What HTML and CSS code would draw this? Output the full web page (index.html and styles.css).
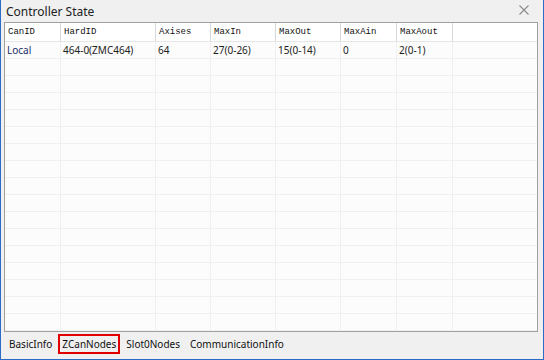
FILE: index.html
```html
<!DOCTYPE html>
<html>
<head>
  <title>Controller State</title>
  <link rel="stylesheet" href="styles.css">
</head>
<body>
  <div class="window">
    <div class="title-bar">
      <span class="title">Controller State</span>
      <span class="close">
        <svg width="10" height="10" viewBox="0 0 10 10"><path d="M0.5 0.5 L9.5 9.5 M9.5 0.5 L0.5 9.5" stroke="#8a8a8a" stroke-width="1.1" fill="none"/></svg>
      </span>
    </div>

    <div class="grid-frame">
      <table class="grid">
        <thead>
          <tr>
            <th class="c1">CanID</th>
            <th class="c2">HardID</th>
            <th class="c3">Axises</th>
            <th class="c4">MaxIn</th>
            <th class="c5">MaxOut</th>
            <th class="c6">MaxAin</th>
            <th class="c7">MaxAout</th>
            <th></th>
          </tr>
        </thead>
        <tbody id="rows">
          <tr>
            <td class="local">Local</td>
            <td>464-0(ZMC464)</td>
            <td>64</td>
            <td>27(0-26)</td>
            <td>15(0-14)</td>
            <td>0</td>
            <td>2(0-1)</td>
            <td></td>
          </tr>
        </tbody>
      </table>
    </div>

    <div class="tabs">
      <span class="tab">BasicInfo</span>
      <span class="tab active">ZCanNodes</span>
      <span class="tab">Slot0Nodes</span>
      <span class="tab">CommunicationInfo</span>
    </div>
  </div>

  <script>
    // empty rows to fill the grid
    const rows = document.getElementById('rows');
    for (let i = 0; i < 18; i++) {
      const tr = document.createElement('tr');
      for (let j = 0; j < 8; j++) {
        tr.appendChild(document.createElement('td'));
      }
      rows.appendChild(tr);
    }
  </script>
</body>
</html>
```

FILE: styles.css
```css
body {
  margin: 0;
  font-family: "Noto Sans", Arial, sans-serif;
  background-color: #f0f0f0;
}

.window {
  width: 544px;
  height: 360px;
  box-sizing: border-box;
  border: 1px solid #2b6cc4;
  border-top: none;
  background-color: #f0f0f0;
  display: flex;
  flex-direction: column;
  overflow: hidden;
}

.title-bar {
  height: 22px;
  flex: none;
  display: flex;
  align-items: center;
  justify-content: space-between;
  padding: 0 14px 0 5px;
}

.title {
  font-size: 12px;
  color: #222;
}

.close {
  display: flex;
  margin-top: -3px;
}

.grid-frame {
  flex: 1;
  margin: 0 5px 0 3px;
  border: 1px solid #a0a0a0;
  background-color: #fcfcfc;
  overflow: hidden;
}

.grid {
  border-collapse: collapse;
  table-layout: fixed;
  width: 100%;
}

.grid th {
  height: 18px;
  padding: 0 0 0 3px;
  font-family: "Liberation Mono", monospace;
  font-size: 9px;
  font-weight: normal;
  text-align: left;
  color: #111;
  background-color: #fff;
  border-right: 1px solid #d8d8d8;
  border-bottom: 1px solid #e6e6e6;
}

.grid th:last-child {
  border-right: none;
}

.c1 { width: 52px; }
.c2 { width: 91px; }
.c3 { width: 51px; }
.c4 { width: 61px; }
.c5 { width: 61px; }
.c6 { width: 52px; }
.c7 { width: 52px; }

.grid td {
  height: 16px;
  padding: 0 0 0 2px;
  font-size: 10px;
  color: #222;
  border-right: 1px solid #f0f0f0;
  border-bottom: 1px solid #f0f0f0;
  white-space: nowrap;
}

.grid td:last-child {
  border-right: none;
}

.grid .local {
  color: #1a2a6a;
}

.tabs {
  height: 25px;
  flex: none;
  display: flex;
  align-items: flex-start;
  padding: 2px 0 0 4px;
  font-size: 10px;
  color: #111;
}

.tab {
  height: 16px;
  line-height: 16px;
  padding: 0 2px;
  margin-right: 2px;
  border: 2px solid transparent;
}

.tab.active {
  border: 2px solid #e00000;
}
```
